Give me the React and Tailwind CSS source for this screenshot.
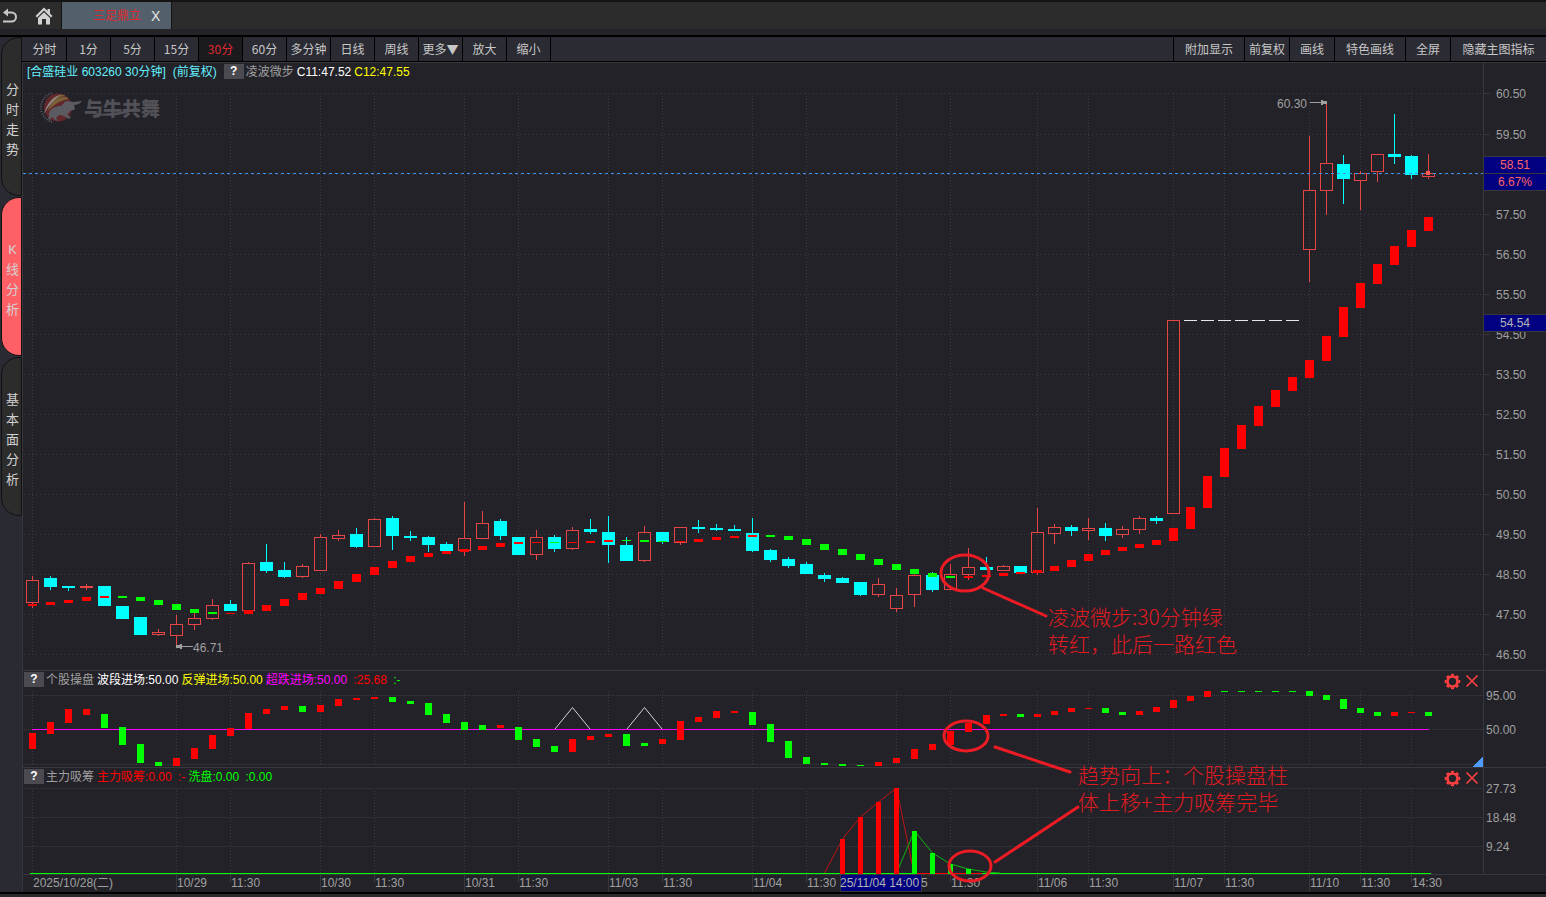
import React from 'react';

const PERIODS = ['分时', '1分', '5分', '15分', '30分', '60分', '多分钟', '日线', '周线', '更多▼', '放大', '缩小'];

const TOOLS = [
  { label: '附加显示', width: 'w-[71px]' },
  { label: '前复权', width: 'w-[45px]' },
  { label: '画线', width: 'w-[45px]' },
  { label: '特色画线', width: 'w-[71px]' },
  { label: '全屏', width: 'w-[45px]' },
  { label: '隐藏主图指标', width: 'w-24' },
];

const SIDE_TABS = ['分时走势', 'K线分析', '基本面分析'];

// Candle: [up/down, high, top, bottom, low], null where the price never moved
const U = 'up';
const D = 'down';
const CANDLES = [
  [U, 576, 580, 603, 608], [D, 576, 578, 587, 590], [D, 586, 586, 588, 591], [U, 584, 586, 588, 590],
  [D, 586, 586, 606, 606], [D, 606, 606, 619, 619], [D, 617, 617, 635, 635], [U, 629, 632, 635, 636],
  [U, 615, 624, 636, 646], [U, 613, 618, 625, 630], [U, 599, 605, 619, 620], [D, 600, 604, 611, 611],
  [U, 562, 563, 611, 611], [D, 544, 562, 571, 573], [D, 562, 570, 577, 578], [U, 564, 566, 577, 578],
  [U, 534, 537, 571, 571], [U, 530, 535, 539, 541], [D, 528, 534, 547, 548], [U, 518, 519, 547, 547],
  [D, 516, 518, 536, 550], [D, 531, 536, 538, 541], [D, 536, 537, 545, 552], [D, 542, 544, 551, 551],
  [U, 502, 538, 551, 556], [U, 511, 523, 539, 539], [D, 519, 521, 536, 540], [D, 537, 537, 555, 555],
  [U, 530, 537, 555, 560], [D, 535, 537, 549, 552], [U, 527, 530, 549, 550], [D, 519, 529, 532, 534],
  [D, 516, 532, 545, 563], [D, 537, 545, 561, 561], [U, 526, 532, 561, 562], [D, 532, 532, 542, 544],
  [U, 527, 527, 543, 545], [D, 520, 527, 529, 533], [D, 524, 528, 530, 531], [D, 525, 529, 531, 531],
  [D, 518, 533, 551, 552], [D, 549, 550, 560, 562], [D, 557, 559, 566, 568], [D, 562, 564, 574, 574],
  [D, 573, 575, 579, 582], [D, 577, 578, 583, 583], [D, 582, 582, 595, 596], [U, 578, 584, 595, 597],
  [U, 588, 595, 609, 612], [U, 574, 575, 595, 607], [D, 572, 575, 590, 592], [U, 564, 574, 590, 590],
  [U, 548, 567, 575, 580], [D, 557, 567, 570, 570], [U, 565, 566, 571, 571], [D, 566, 566, 573, 573],
  [U, 508, 532, 573, 575], [U, 524, 527, 534, 544], [D, 525, 527, 531, 536], [U, 518, 528, 531, 540],
  [D, 523, 528, 536, 541], [U, 526, 529, 535, 538], [U, 516, 518, 530, 534], [D, 516, 518, 521, 524],
  [U, 320, 320, 514, 514], null, null, null, null, null, null, null,
  [U, 136, 190, 250, 282], [U, 102, 163, 191, 215], [D, 155, 164, 179, 204], [U, 171, 173, 181, 210],
  [U, 154, 154, 172, 182], [D, 114, 154, 157, 164], [D, 155, 156, 175, 179], [U, 154, 173, 177, 179],
];

// Trend blocks: [color, top, bottom]
const R = '#ff0000';
const G = '#00ff00';
const TREND = [
  [R, 604, 606], [R, 602, 605], [R, 600, 603], [R, 597, 601], [R, 596, 598], [G, 596, 598], [G, 597, 601], [G, 600, 605],
  [G, 604, 610], [G, 609, 613], [G, 612, 614], [R, 613, 614], [R, 610, 614], [R, 605, 611], [R, 599, 606], [R, 593, 600],
  [R, 588, 594], [R, 581, 589], [R, 574, 582], [R, 567, 575], [R, 561, 568], [R, 556, 562], [R, 553, 557], [R, 551, 554],
  [R, 549, 552], [R, 546, 550], [R, 543, 547], [R, 542, 544], [R, 542, 543], [G, 542, 543], [R, 542, 543], [R, 541, 543],
  [R, 540, 542], [G, 540, 541], [G, 540, 542], [G, 541, 542], [R, 541, 542], [R, 539, 542], [R, 537, 540], [R, 536, 538],
  [R, 535, 537], [G, 535, 537], [G, 536, 540], [G, 539, 545], [G, 544, 550], [G, 549, 555], [G, 554, 560], [G, 559, 565],
  [G, 564, 570], [G, 569, 574], [G, 573, 577], [G, 576, 578], [R, 576, 578], [R, 575, 577], [R, 573, 576], [R, 572, 574],
  [R, 570, 573], [R, 566, 571], [R, 560, 567], [R, 554, 561], [R, 550, 555], [R, 547, 551], [R, 544, 548], [R, 540, 545],
  [R, 528, 541], [R, 507, 529], [R, 476, 508], [R, 448, 477], [R, 425, 449], [R, 406, 426], [R, 390, 407], [R, 377, 391],
  [R, 360, 378], [R, 336, 361], [R, 307, 337], [R, 283, 308], [R, 264, 284], [R, 246, 265], [R, 230, 247], [R, 217, 231],
];

const SWING = [
  [R, 733, 749], [R, 722, 734], [R, 709, 723], [R, 709, 715], [G, 714, 728], [G, 727, 745], [G, 744, 763], [G, 762, 766],
  [R, 758, 766], [R, 748, 759], [R, 735, 749], [R, 728, 736], [R, 713, 729], [R, 709, 714], [R, 706, 710], [G, 706, 712],
  [R, 705, 712], [R, 699, 706], [R, 698, 700], [R, 697, 699], [G, 697, 702], [G, 701, 704], [G, 703, 715], [G, 714, 723],
  [G, 722, 730], [G, 725, 730], [R, 725, 728], [G, 727, 740], [G, 739, 747], [G, 746, 752], [R, 739, 752], [R, 736, 740],
  [R, 734, 737], [G, 734, 746], [G, 743, 746], [R, 739, 744], [R, 721, 740], [R, 717, 722], [R, 711, 718], [R, 711, 713],
  [G, 712, 725], [G, 724, 742], [G, 741, 758], [G, 757, 764], [G, 763, 765], [G, 764, 766], [G, 765, 766], [R, 762, 766],
  [R, 758, 763], [R, 749, 759], [R, 744, 750], [R, 731, 745], [R, 723, 732], [R, 715, 724], [R, 714, 716], [G, 714, 717],
  [R, 714, 717], [R, 711, 715], [R, 708, 712], [R, 708, 709], [G, 708, 713], [G, 712, 715], [R, 711, 715], [R, 707, 712],
  [R, 700, 708], [R, 696, 701], [R, 691, 697], [G, 691, 692], [G, 691, 692], [G, 691, 692], [G, 691, 692], [G, 691, 692],
  [G, 691, 696], [G, 695, 700], [G, 699, 709], [G, 708, 713], [G, 712, 716], [R, 712, 716], [R, 712, 713], [G, 712, 716],
];

const VOLUME = [
  [842, 839, R], [860, 817, R], [878, 802, R], [896, 788, R],
  [914, 831, G], [932, 853, G], [950, 864, G], [968, 869, G],
];

const PRICES = [
  ['60.50', 93], ['59.50', 134], [null, 174], ['57.50', 214], ['56.50', 254], ['55.50', 294], ['54.50', 334], ['53.50', 374],
  ['52.50', 414], ['51.50', 454], ['50.50', 494], ['49.50', 534], ['48.50', 574], ['47.50', 614], ['46.50', 654],
];

const TIMES = [
  [32, '2025/10/28(二)'], [176, '10/29'], [230, '11:30'], [320, '10/30'], [374, '11:30'], [464, '10/31'], [518, '11:30'],
  [608, '11/03'], [662, '11:30'], [752, '11/04'], [806, '11:30'], [896, null], [950, '11:30'], [1037, '11/06'],
  [1088, '11:30'], [1173, '11/07'], [1224, '11:30'], [1309, '11/10'], [1360, '11:30'], [1411, '14:30'],
];

const GRID = '#3a3a40';
const LINE = '#37373c';

const barX = (i) => (i <= 53 ? 32 + i * 18 : 986 + (i - 53) * 17);

const VGrid = ({ y1, y2 }) => (
  <g stroke={GRID} strokeDasharray="1 2">
    {TIMES.map(([x]) => (
      <line key={x} x1={x + 0.5} x2={x + 0.5} y1={y1} y2={y2} />
    ))}
  </g>
);

const HGrid = ({ rows, dash }) => (
  <g stroke={GRID} strokeDasharray={dash}>
    {rows.map((y) => (
      <line key={y} x1="24" x2="1483" y1={y + 0.5} y2={y + 0.5} />
    ))}
  </g>
);

const Candle = ({ x, data }) => {
  if (!data) return <rect x={x - 6} y="320" width="13" height="1" fill="#e6e6e6" />;
  const [dir, high, top, bottom, low] = data;
  const color = dir === U ? '#e64545' : '#00ffff';
  return (
    <g>
      {top > high && <rect x={x} y={high} width="1" height={top - high} fill={color} />}
      {low > bottom && <rect x={x} y={bottom} width="1" height={low - bottom} fill={color} />}
      {dir === U ? (
        <rect x={x - 5.5} y={top + 0.5} width="12" height={bottom - top - 1} fill="none" stroke={color} />
      ) : (
        <rect x={x - 6} y={top} width="13" height={bottom - top} fill={color} />
      )}
    </g>
  );
};

const Logo = () => (
  <g opacity="0.85" shapeRendering="auto">
    <clipPath id="logo-left">
      <rect x="38" y="92" width="14" height="32" />
    </clipPath>
    <circle cx="58" cy="107.5" r="14" fill="#6e282d" />
    <circle cx="56" cy="107.5" r="15" fill="none" stroke="#66666c" strokeWidth="2" strokeDasharray="1 1.5" pathLength="94" clipPath="url(#logo-left)" />
    <path d="M48 111C50 103 56 97 66 97L69 99C61 100 54 104 48 111Z" fill="#8a6c3a" />
    <path d="M49 103C52 98 57 95 62 94.500L66 96C57 97 51 102 45 112Z" fill="#8a6c3a" />
    <path d="M44 114C46 106 51 98 60 95C54 100 48 106 44 114Z" fill="#a39894" />
    <path
      d="M49 113C51 108 56 106 61 106L64 103C66 100 70 102 73 102C76 102 79 101 82 101C80 104 76 105 74 105L75 109C73 111 71 110 70 111L67 115L71 117L69 119L64 116L59 115L56 118L58 121L55 120L52 117L50 119L52 121L48 119L49 116Z"
      fill="#66666c"
    />
    <text x="84" y="116" className="text-[19px] font-black" fill="#5a5a60">与牛共舞</text>
    <path d="M88 112C104 116 122 112 141 107C124 116 104 119 88 112Z" fill="#5a5a60" />
  </g>
);

const MainChart = () => (
  <svg viewBox="23 82 1523 588" className="block w-full" shapeRendering="crispEdges">
    <VGrid y1={93} y2={655} />
    <HGrid rows={PRICES.map((p) => p[1])} dash="1 3" />
    <Logo />
    <line x1="1483.5" x2="1483.5" y1="82" y2="670" stroke={LINE} />
    {PRICES.map(([label, y]) => (
      <g key={y}>
        <rect x="1484" y={y} width="6" height="1" fill={LINE} />
        {label && <text x="1496" y={y + 5} fill="#a0a0a0">{label}</text>}
      </g>
    ))}
    {CANDLES.map((c, i) => (
      <Candle key={i} x={barX(i)} data={c} />
    ))}
    {TREND.map(([color, top, bottom], i) => (
      <rect key={i} x={barX(i) - 4} y={top} width="9" height={bottom - top} fill={color} />
    ))}
    <line x1="23" x2="1483" y1="173.5" y2="173.5" stroke="#3c96f0" strokeDasharray="3 3" />
    <circle cx="1428" cy="173" r="2.5" fill="#ff5a5a" />

    {/* High and low markers */}
    <text x="1277" y="108" fill="#a0a0a0">60.30</text>
    <path d="M1310 102.5H1322" stroke="#a0a0a0" />
    <path d="M1321 100h2v1h4v3h-4v1h-2z" fill="#a0a0a0" />
    <text x="193" y="652" fill="#a0a0a0">46.71</text>
    <path d="M181 646.5H193" stroke="#a0a0a0" />
    <path d="M182 644h-2v1h-4v3h4v1h2z" fill="#a0a0a0" />

    {/* Current price tags */}
    <rect x="1484" y="156" width="62" height="35" fill={LINE} />
    <rect x="1484" y="157" width="62" height="16" fill="#000080" />
    <rect x="1484" y="174" width="62" height="16" fill="#000080" />
    <text x="1500" y="169" fill="#ff6464">58.51</text>
    <text x="1498" y="186" fill="#ff6464">6.67%</text>
    <rect x="1484" y="314" width="62" height="18" fill={LINE} />
    <rect x="1484" y="315" width="62" height="16" fill="#000080" />
    <text x="1500" y="327" fill="#b4b4b4">54.54</text>
  </svg>
);

const SwingChart = () => (
  <svg viewBox="23 690 1523 77" className="block w-full" shapeRendering="crispEdges">
    <VGrid y1={691} y2={766} />
    <HGrid rows={[695, 729, 764]} dash="1 1" />
    <line x1="1483.5" x2="1483.5" y1="690" y2="767" stroke={LINE} />
    <rect x="32" y="729" width="1397" height="1" fill="#ff00ff" />
    <path d="M555 729L572.5 707.5L590 729M627 729L644.5 707.5L662 729" fill="none" stroke="#d2d2d2" shapeRendering="auto" />
    {SWING.map(([color, top, bottom], i) => (
      <rect key={i} x={barX(i) - 3} y={top} width="7" height={bottom - top} fill={color} />
    ))}
    <path d="M1483 756V767H1472Z" fill="#4f9bff" />
    <text x="1486" y="700" fill="#a0a0a0">95.00</text>
    <text x="1486" y="734" fill="#a0a0a0">50.00</text>
  </svg>
);

const VolumeChart = () => (
  <svg viewBox="23 787 1523 105" className="block w-full overflow-visible" shapeRendering="crispEdges">
    <VGrid y1={788} y2={873} />
    <HGrid rows={[788, 817, 846]} dash="1 1" />
    <line x1="1483.5" x2="1483.5" y1="787" y2="874" stroke={LINE} />
    <rect x="23" y="874" width="1523" height="1" fill={LINE} />
    <rect x="30" y="873" width="1401" height="1" fill={G} />
    <rect x="914" y="873" width="68" height="1" fill={R} />
    <g fill="none" shapeRendering="auto">
      <path d="M824.5 873L842.5 839L860.5 817L878.5 802L896.5 788L914 873" stroke="#be1414" />
      <path d="M896.5 873L914.5 831L932.5 853L950.5 864L968.5 869L986 872L1000 873" stroke="#10b410" />
    </g>
    {VOLUME.map(([x, top, color]) => (
      <rect key={x} x={x - 2} y={top} width="5" height={874 - top} fill={color} />
    ))}
    <text x="1486" y="793" fill="#a0a0a0">27.73</text>
    <text x="1486" y="822" fill="#a0a0a0">18.48</text>
    <text x="1486" y="851" fill="#a0a0a0">9.24</text>

    {TIMES.map(([x, label]) => (
      <g key={x}>
        {x > 32 && <rect x={x} y="875" width="1" height={label?.includes(':') ? 8 : 17} fill={LINE} />}
        {label && <text x={x + 1} y="887" fill="#a0a0a0">{label}</text>}
      </g>
    ))}
    <rect x="840" y="874" width="82" height="18" fill={LINE} />
    <rect x="841" y="875" width="80" height="16" fill="#000080" />
    <text x="840" y="887" fill="#b4b4b4">25/11/04 14:00</text>
    <text x="921" y="887" fill="#a0a0a0">5</text>
  </svg>
);

const Annotations = () => (
  <svg viewBox="23 82 1523 810" className="pointer-events-none absolute inset-0 w-full">
    <g fill="none" stroke="#ed1c24" strokeWidth="3" strokeLinecap="round">
      <ellipse cx="965" cy="573" rx="24" ry="18" />
      <path d="M983 588L1046 616" />
      <ellipse cx="966" cy="736" rx="22" ry="15" />
      <path d="M995 747L1070 772" />
      <ellipse cx="970" cy="866" rx="21" ry="15" />
      <path d="M995 862L1078 807" />
    </g>
    <g fill="#e01b22" className="font-['Noto_Sans_CJK_SC',sans-serif] text-[21px] font-light">
      <text x="1048" y="625">凌波微步:30分钟绿</text>
      <text x="1048" y="652">转红，此后一路红色</text>
      <text x="1078" y="783">趋势向上：个股操盘柱</text>
      <text x="1078" y="810">体上移+主力吸筹完毕</text>
    </g>
  </svg>
);

const HelpButton = () => (
  <button className="h-[15px] w-5 bg-[#4a4a50] text-center font-bold leading-[15px] text-white" aria-label="?">
    ?
  </button>
);

const PanelActions = () => (
  <div className="flex items-center gap-1 pr-1 pt-px text-[#ff4040]">
    <button aria-label="设置">
      <svg width="17" height="17" viewBox="0 0 17 17" fill="none" stroke="currentColor">
        <circle cx="8.5" cy="8.5" r="5" strokeWidth="2.6" />
        <circle cx="8.5" cy="8.5" r="6.9" strokeWidth="1.8" pathLength="48" strokeDasharray="3.4 2.6" strokeDashoffset="1.7" />
      </svg>
    </button>
    <button aria-label="关闭">
      <svg width="14" height="14" viewBox="0 0 14 14" stroke="currentColor" strokeWidth="1.6">
        <path d="M1.500 1.500L12.500 12.500M12.500 1.500L1.500 12.500" />
      </svg>
    </button>
  </div>
);

const PanelHeader = ({ title, children }) => (
  <div className="flex h-5 border-t border-[#37373c]">
    <div className="flex flex-1 items-center justify-between border-r border-[#37373c]">
      <div className="flex items-center gap-[3px] whitespace-pre pb-0.5 pl-px">
        <HelpButton />
        <span className="-ml-px text-[#a0a0a0]">{title}</span>
        {children}
      </div>
      <PanelActions />
    </div>
    <div className="w-[62px]" />
  </div>
);

const TopBar = () => (
  <header className="flex h-[29px] items-stretch border-t-2 border-[#141414] bg-[#2c2c2c]">
    <button className="w-6 pl-0.5" aria-label="返回">
      <svg width="16" height="16" viewBox="0 0 16 16" fill="none" stroke="#c8c8c8" strokeWidth="2">
        <path d="M3 4.5H9.5A4 4 0 0 1 9.5 13.5H1" />
        <path d="M1 4.5L6 0.5V8.5Z" fill="#c8c8c8" stroke="none" />
      </svg>
    </button>
    <button className="flex w-[37px] items-center justify-center pl-0.5" aria-label="首页">
      <svg width="18" height="18" viewBox="0 0 18 18" fill="#d2d2d2">
        <path d="M9 0.5L0.5 9L2 10.4L9 3.6L16 10.4L17.5 9L15 6.500V2H12.500V4Z" />
        <path d="M3 11L9 5.2L15 11V17.5H11V12H7V17.5H3Z" />
      </svg>
    </button>
    <div className="flex w-[111px] items-center border-x border-[#141414] bg-[#53606b] pl-[31px]">
      <span className="text-[#e0282d]">三足鼎立</span>
      <button className="ml-2.5 text-sm leading-none text-[#e6e6e6]" aria-label="X">X</button>
    </div>
  </header>
);

const Toolbar = () => (
  <nav className="flex h-[25px] justify-between border-b border-black bg-[#2b2b33] pl-px font-['Noto_Sans_CJK_SC',sans-serif] text-[#c8c8c8] shadow-[0_1px_0_#37373c]">
    <div className="flex">
      {PERIODS.map((p) => (
        <button
          key={p}
          className={`w-11 whitespace-nowrap border-r border-black text-center ${p === '30分' ? 'bg-[#1a1a1f] text-[#e0282d]' : ''}`}
        >
          {p}
        </button>
      ))}
    </div>
    <div className="flex">
      {TOOLS.map((t) => (
        <button key={t.label} className={`border-l border-black text-center ${t.width}`}>
          {t.label}
        </button>
      ))}
    </div>
  </nav>
);

const SideTabs = () => (
  <aside className="flex w-[22px] shrink-0 flex-col gap-px bg-[#2a2a33]">
    {SIDE_TABS.map((tab) => (
      <button
        key={tab}
        className={`ml-px flex h-[159px] w-[21px] flex-col items-center justify-center rounded-l-[18px] border border-[#111] pl-0.5 pt-1.5 text-[13px] leading-5 text-[#d2d2d2] ${
          tab === 'K线分析' ? 'bg-[#ff6066]' : 'bg-[#2c2c2c]'
        }`}
      >
        {[...tab].map((ch) => (
          <span key={ch}>{ch}</span>
        ))}
      </button>
    ))}
  </aside>
);

const App = () => (
  <div className="flex min-h-screen flex-col bg-[#2a2a2e] font-['Liberation_Sans','Noto_Sans_CJK_SC',sans-serif] text-xs">
    <TopBar />
    <div className="h-[6px] bg-[#242428]" />
    <div className="flex border-y-2 border-black bg-[#232228]">
      <SideTabs />
      <div className="min-w-0 flex-1">
        <Toolbar />
        <main className="border-l border-[#37373c]">
          <div className="flex h-5">
            <div className="flex flex-1 items-center gap-[3px] whitespace-pre border-r border-[#37373c] pb-px pl-1">
              <span className="text-[#64f0ff]">[合盛硅业 603260 30分钟]</span>
              <span className="ml-1 mr-1 text-[#64f0ff]">(前复权)</span>
              <HelpButton />
              <span className="-ml-px text-[#a0a0a0]">凌波微步</span>
              <span className="text-white">C11:47.52</span>
              <span className="text-[#ffff00]">C12:47.55</span>
            </div>
            <div className="w-[62px]" />
          </div>
          <div className="relative">
            <MainChart />
            <PanelHeader title="个股操盘">
              <span className="text-white">波段进场:50.00</span>
              <span className="text-[#ffff00]">反弹进场:50.00</span>
              <span className="text-[#ff00ff]">超跌进场:50.00</span>
              <span className="text-[#ff0000]"> :25.68</span>
              <span className="text-[#00ff00]"> :-</span>
            </PanelHeader>
            <SwingChart />
            <PanelHeader title="主力吸筹">
              <span className="text-[#ff0000]">主力吸筹:0.00</span>
              <span className="text-[#ff0000]"> :-</span>
              <span className="text-[#00ff00]">洗盘:0.00</span>
              <span className="text-[#00ff00]"> :0.00</span>
            </PanelHeader>
            <VolumeChart />
            <Annotations />
          </div>
        </main>
      </div>
    </div>
  </div>
);

export default App;
